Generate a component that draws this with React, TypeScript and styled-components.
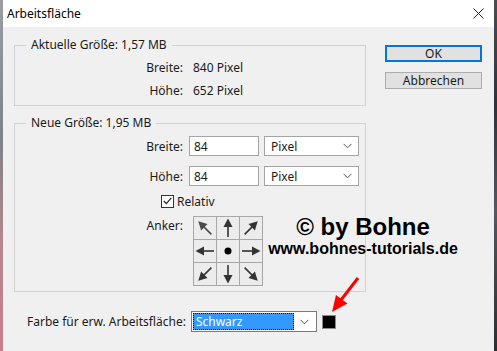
import React from "react";
import styled, { createGlobalStyle } from "styled-components";

const Global = createGlobalStyle`
  html, body { margin: 0; padding: 0; }
  body {
    width: 497px;
    height: 351px;
    overflow: hidden;
    font-family: "Noto Sans", "Liberation Sans", sans-serif;
    font-size: 12px;
    color: #1a1a1a;
  }
`;

const Screen = styled.div`
  display: flex;
  width: 497px;
  height: 351px;
`;

const Desktop = styled.div<{ $dark?: boolean }>`
  width: 3px;
  flex: none;
  background: ${(p) =>
    p.$dark
      ? "linear-gradient(#4a4d52, #2f3236 30%, #55585c 60%, #2c2e31)"
      : "linear-gradient(#9a9ea3, #7f8388 40%, #b7868e 70%, #c97d88)"};
`;

const Dialog = styled.div`
  flex: 1;
  display: flex;
  flex-direction: column;
  background: #f0f0f0;
`;

const TitleBar = styled.div`
  height: 27px;
  flex: none;
  background: #ffffff;
  display: flex;
  align-items: center;
  justify-content: space-between;
  padding: 0 10px 0 4px;
`;

const Title = styled.span`
  font-size: 12px;
  color: #000;
`;

const Body = styled.div`
  position: relative;
  flex: 1;
  padding: 10px 12px 0 11px;
  display: flex;
  flex-direction: column;
`;

const TopArea = styled.div`
  display: flex;
  gap: 19px;
`;

const Groups = styled.div`
  width: 352px;
  display: flex;
  flex-direction: column;
  gap: 9px;
`;

const Group = styled.fieldset<{ $pt: number; $pb: number }>`
  margin: 0;
  padding: ${(p) => p.$pt}px 0 ${(p) => p.$pb}px 0;
  border: 1px solid #d2d2d2;
  min-width: 0;
`;

const Legend = styled.legend`
  margin-left: 11px;
  padding: 0 5px 0 5px;
  line-height: 16px;
  font-size: 12px;
`;

const Row = styled.div<{ $h: number; $gap?: number }>`
  display: grid;
  grid-template-columns: 168px auto auto;
  justify-content: start;
  column-gap: 4px;
  align-items: center;
  height: ${(p) => p.$h}px;
  margin-top: ${(p) => p.$gap ?? 0}px;
`;

const Label = styled.span<{ $top?: boolean }>`
  text-align: right;
  align-self: ${(p) => (p.$top ? "start" : "center")};
  padding-top: ${(p) => (p.$top ? 1 : 0)}px;
`;

const Value = styled.span`
  padding-left: 6px;
`;

const TextBox = styled.div`
  width: 64px;
  height: 18px;
  border: 1px solid #a5a5a5;
  background: #fff;
  display: flex;
  align-items: center;
  padding-left: 4px;
  box-sizing: content-box;
  margin-left: 2px;
`;

const Select = styled.div<{ $w: number }>`
  width: ${(p) => p.$w}px;
  height: 20px;
  box-sizing: border-box;
  border: 1px solid #a5a5a5;
  background: #fff;
  display: flex;
  align-items: center;
  justify-content: space-between;
  padding: 0 6px 0 6px;
  margin-left: 1px;
`;

const CheckRow = styled.div`
  display: flex;
  align-items: center;
  gap: 3px;
  height: 16px;
  margin: 7px 0 0 146px;
`;

const CheckBox = styled.div`
  width: 11px;
  height: 11px;
  border: 1px solid #333;
  background: #fff;
  display: flex;
  align-items: center;
  justify-content: center;
`;

const AnchorGrid = styled.div`
  display: grid;
  grid-template-columns: repeat(3, 22px);
  grid-template-rows: repeat(3, 22px);
  gap: 1px;
  padding: 1px;
  background: #a8a8a8;
  width: max-content;
  margin-left: 6px;
`;

const AnchorCell = styled.div`
  background: #ececec;
  display: flex;
  align-items: center;
  justify-content: center;
`;

const Buttons = styled.div`
  width: 97px;
  display: flex;
  flex-direction: column;
  gap: 10px;
  margin-top: 8px;
`;

const Button = styled.div<{ $primary?: boolean }>`
  height: 17px;
  box-sizing: border-box;
  background: #e1e1e1;
  border: ${(p) => (p.$primary ? "2px solid #0078d7" : "1px solid #adadad")};
  display: flex;
  align-items: center;
  justify-content: center;
  font-size: 12px;
`;

const BottomRow = styled.div`
  display: flex;
  align-items: center;
  gap: 5px;
  margin: 19px 0 0 13px;
  height: 21px;
`;

const ColorSelect = styled.div`
  width: 126px;
  height: 21px;
  box-sizing: border-box;
  border: 1px solid #7a7a7a;
  background: #fff;
  display: flex;
  align-items: center;
  padding: 1px;
`;

const Highlight = styled.div`
  flex: 0 0 101px;
  height: 100%;
  box-sizing: border-box;
  background: #3399ff;
  border: 1px dotted #000;
  color: #fff;
  display: flex;
  align-items: center;
  padding-left: 2px;
`;

const Chevron = styled.div`
  flex: 1;
  display: flex;
  justify-content: center;
`;

const Swatch = styled.div`
  width: 12px;
  height: 12px;
  background: #000;
  border: 1px solid #8a8a8a;
`;

const Watermark = styled.div`
  position: absolute;
  left: 262px;
  top: 186px;
  width: 196px;
  display: flex;
  flex-direction: column;
  align-items: center;
  font-family: "Liberation Sans", Arial, sans-serif;
  font-weight: bold;
  color: #000;
`;

const Mark = styled.div<{ $size: number; $lh: number }>`
  font-size: ${(p) => p.$size}px;
  line-height: ${(p) => p.$lh}px;
`;

const Pointer = styled.svg`
  position: absolute;
  left: 317px;
  top: 247px;
`;

const Down = () => (
  <svg width="9" height="6" viewBox="0 0 9 6">
    <path d="M0.5 0.8 L4.5 4.8 L8.5 0.8" fill="none" stroke="#555" strokeWidth="1" />
  </svg>
);

const Arrow = ({ angle, soft }: { angle: number; soft?: boolean }) => (
  <svg width="22" height="22" viewBox="0 0 22 22">
    <g
      transform={`rotate(${angle} 11 11)`}
      fill={soft ? "#4a4a4a" : "#333"}
      stroke={soft ? "#4a4a4a" : "#333"}
    >
      <line x1="11" y1="20" x2="11" y2="8" strokeWidth="1.6" />
      <polygon points="11,1.5 6.5,10 15.5,10" stroke="none" />
    </g>
  </svg>
);

const anchors: (number | null)[] = [-45, 0, 45, -90, null, 90, -135, 180, 135];

export default function App() {
  return (
    <Screen>
      <Global />
      <Desktop />
      <Dialog>
        <TitleBar>
          <Title>Arbeitsfläche</Title>
          <svg width="11" height="11" viewBox="0 0 11 11">
            <path d="M0.5 0.5 L10.5 10.5 M10.5 0.5 L0.5 10.5" stroke="#222" strokeWidth="1" />
          </svg>
        </TitleBar>
        <Body>
          <TopArea>
            <Groups>
              <Group $pt={3} $pb={3}>
                <Legend>Aktuelle Größe: 1,57 MB</Legend>
                <Row $h={23}>
                  <Label>Breite:</Label>
                  <Value>840 Pixel</Value>
                </Row>
                <Row $h={23}>
                  <Label>Höhe:</Label>
                  <Value>652 Pixel</Value>
                </Row>
              </Group>
              <Group $pt={5} $pb={5}>
                <Legend>Neue Größe: 1,95 MB</Legend>
                <Row $h={20}>
                  <Label>Breite:</Label>
                  <TextBox>84</TextBox>
                  <Select $w={95}>
                    Pixel
                    <Down />
                  </Select>
                </Row>
                <Row $h={20} $gap={10}>
                  <Label>Höhe:</Label>
                  <TextBox>84</TextBox>
                  <Select $w={95}>
                    Pixel
                    <Down />
                  </Select>
                </Row>
                <CheckRow>
                  <CheckBox>
                    <svg width="9" height="8" viewBox="0 0 9 8">
                      <path d="M0.8 4 L3.3 6.6 L8.3 0.8" fill="none" stroke="#222" strokeWidth="1.2" />
                    </svg>
                  </CheckBox>
                  Relativ
                </CheckRow>
                <Row $h={70} $gap={7}>
                  <Label $top>Anker:</Label>
                  <AnchorGrid>
                    {anchors.map((a, i) => (
                      <AnchorCell key={i}>
                        {a === null ? (
                          <svg width="8" height="8" viewBox="0 0 8 8">
                            <circle cx="4" cy="4" r="3.5" fill="#000" />
                          </svg>
                        ) : (
                          <Arrow angle={a} soft={i === 0} />
                        )}
                      </AnchorCell>
                    ))}
                  </AnchorGrid>
                </Row>
              </Group>
            </Groups>
            <Buttons>
              <Button $primary>OK</Button>
              <Button>Abbrechen</Button>
            </Buttons>
          </TopArea>
          <BottomRow>
            <span>Farbe für erw. Arbeitsfläche:</span>
            <ColorSelect>
              <Highlight>Schwarz</Highlight>
              <Chevron>
                <Down />
              </Chevron>
            </ColorSelect>
            <Swatch />
          </BottomRow>
          <Watermark>
            <Mark $size={24} $lh={27}>© by Bohne</Mark>
            <Mark $size={16} $lh={18}>www.bohnes-tutorials.de</Mark>
          </Watermark>
          <Pointer width="44" height="44" viewBox="0 0 44 44">
            <line x1="38" y1="4" x2="21" y2="26" stroke="#ff0000" strokeWidth="3" />
            <polygon points="12,38 27.5,29.5 16,21" fill="#ff0000" />
          </Pointer>
        </Body>
      </Dialog>
      <Desktop $dark />
    </Screen>
  );
}
